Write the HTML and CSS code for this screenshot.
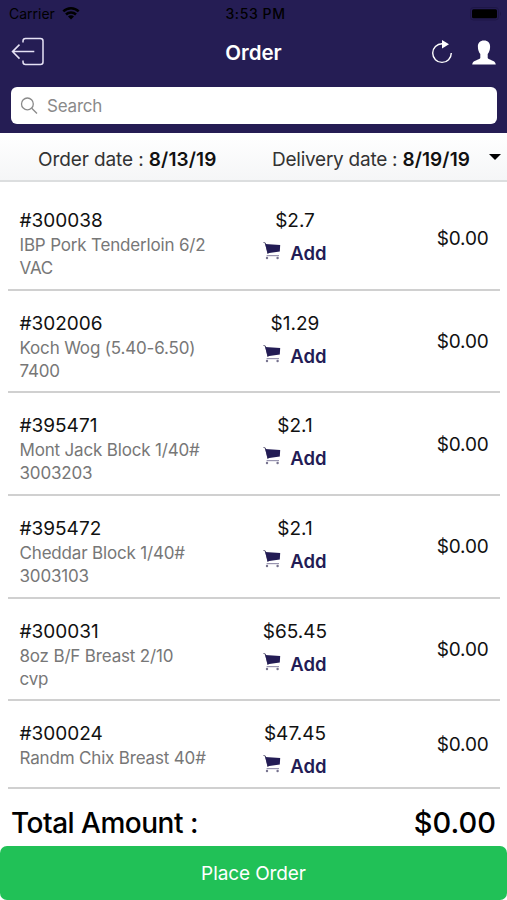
FILE: index.html
```
<!DOCTYPE html>
<html lang="en">
<head>
    <meta charset="UTF-8">
    <meta name="viewport" content="width=device-width, initial-scale=1.0">
    <title>Order</title>
    <link rel="stylesheet" href="styles.css">
</head>
<body>
    <svg class="symbols" width="0" height="0">
        <symbol id="cart" viewBox="0 0 18 18">
            <path d="M0.5 0.5 2.4 1 5 12" fill="none" stroke="#55516f"/>
            <path d="M2.2 2 17.2 3 16.8 9.6 4.6 11.2z" fill="#231c55"/>
            <path d="M3.6 13.6H16" fill="none" stroke="#9995b0" stroke-width="1.2"/>
            <circle cx="4" cy="16" r="1.2" fill="#77738f"/>
            <circle cx="14.6" cy="16" r="1.2" fill="#77738f"/>
        </symbol>
    </svg>

    <div class="header">
        <div class="status-bar">
            <div class="carrier">
                <span>Carrier</span>
                <svg width="18" height="13" viewBox="0 0 18 13">
                    <path d="M1.3 4.4a11 11 0 0 1 15.4 0M4 7.5a7.1 7.1 0 0 1 10 0" fill="none" stroke="#000" stroke-width="2.5"/>
                    <path d="M9 12.4 6 9.4a4.2 4.2 0 0 1 6 0z"/>
                </svg>
            </div>
            <div class="clock">3:53 PM</div>
            <svg class="battery" width="32" height="14" viewBox="0 0 32 14">
                <rect x="0.5" y="0.5" width="28" height="12.5" rx="3" fill="none" stroke="#1e1747"/>
                <rect x="2" y="2.3" width="25" height="9" rx="1.5"/>
                <path d="M30 4.8q2 2 0 4z" fill="#1e1747"/>
            </svg>
        </div>
        <div class="nav-bar">
            <svg width="34" height="30" viewBox="0 0 34 30" fill="none" stroke="#e6e2f5" stroke-width="1.5">
                <path d="M12 5.5V4q0-2.5 2.5-2.5h15Q32 1.500 32 4v21q0 2.500-2.500 2.500h-15Q12 27.500 12 25v-1.500"/>
                <path d="M23.300 14.600H1.500M8.500 7.600l-7 7 7 7"/>
            </svg>
            <div class="title">Order</div>
            <div class="actions">
                <svg width="22" height="24" viewBox="0 0 22 24">
                    <path d="M10 3.800a9.300 9.300 0 1 0 9.300 9.300" fill="none" stroke="#fff" stroke-width="1.400"/>
                    <path d="M10 0 17 4.300 10 8.600z" fill="#fff"/>
                </svg>
                <svg width="24" height="25" viewBox="0 0 24 25">
                    <path d="M12 0.500c4 0 6.300 2.500 6.100 6.500-.1 3-1 5.400-2.400 7.100v4c1 2.400 7.800 1.800 8.100 6.500H.2c.3-4.700 7.100-4.100 8.100-6.500v-4C6.900 12.400 6 10 5.900 7 5.700 3 8 .5 12 .5z" fill="#fff"/>
                </svg>
            </div>
        </div>
        <div class="search">
            <svg width="18" height="18" viewBox="0 0 18 18" fill="none" stroke="#8a8a8a" stroke-width="1.300">
                <circle cx="7.400" cy="6.900" r="5.900"/>
                <path d="M11.700 11.200 17 16.500"/>
            </svg>
            <span>Search</span>
        </div>
    </div>

    <div class="dates">
        <div class="date order-date">Order date : <b>8/13/19</b></div>
        <div class="date delivery-date">Delivery date : <b>8/19/19</b></div>
        <div class="caret"></div>
    </div>

    <div class="list">
        <div class="item">
            <div class="product">
                <div class="code">#300038</div>
                <div class="name">IBP Pork Tenderloin 6/2<br>VAC</div>
            </div>
            <div class="buy">
                <div class="price">$2.7</div>
                <div class="add"><svg class="cart"><use href="#cart"/></svg>Add</div>
            </div>
            <div class="amount">$0.00</div>
        </div>
        <div class="item">
            <div class="product">
                <div class="code">#302006</div>
                <div class="name">Koch Wog (5.40-6.50)<br>7400</div>
            </div>
            <div class="buy">
                <div class="price">$1.29</div>
                <div class="add"><svg class="cart"><use href="#cart"/></svg>Add</div>
            </div>
            <div class="amount">$0.00</div>
        </div>
        <div class="item">
            <div class="product">
                <div class="code">#395471</div>
                <div class="name">Mont Jack Block 1/40#<br>3003203</div>
            </div>
            <div class="buy">
                <div class="price">$2.1</div>
                <div class="add"><svg class="cart"><use href="#cart"/></svg>Add</div>
            </div>
            <div class="amount">$0.00</div>
        </div>
        <div class="item">
            <div class="product">
                <div class="code">#395472</div>
                <div class="name">Cheddar Block 1/40#<br>3003103</div>
            </div>
            <div class="buy">
                <div class="price">$2.1</div>
                <div class="add"><svg class="cart"><use href="#cart"/></svg>Add</div>
            </div>
            <div class="amount">$0.00</div>
        </div>
        <div class="item">
            <div class="product">
                <div class="code">#300031</div>
                <div class="name">8oz B/F Breast 2/10<br>cvp</div>
            </div>
            <div class="buy">
                <div class="price">$65.45</div>
                <div class="add"><svg class="cart"><use href="#cart"/></svg>Add</div>
            </div>
            <div class="amount">$0.00</div>
        </div>
        <div class="item">
            <div class="product">
                <div class="code">#300024</div>
                <div class="name">Randm Chix Breast 40#</div>
            </div>
            <div class="buy">
                <div class="price">$47.45</div>
                <div class="add"><svg class="cart"><use href="#cart"/></svg>Add</div>
            </div>
            <div class="amount">$0.00</div>
        </div>
    </div>

    <div class="total">
        <span class="total-label">Total Amount :</span>
        <span class="total-value">$0.00</span>
    </div>
    <button class="place-order">Place Order</button>
</body>
</html>
```
FILE: styles.css
```
* {
    box-sizing: border-box;
}
body {
    font-family: Inter, "Liberation Sans", sans-serif;
    background-color: #fff;
    color: #111;
    margin: 0;
    height: 900px;
    display: flex;
    flex-direction: column;
    overflow: hidden;
}
.symbols {
    position: absolute;
}
.header {
    background-color: #251d54;
    height: 133px;
    flex: none;
}
.status-bar {
    display: grid;
    grid-template-columns: 1fr auto 1fr;
    align-items: center;
    height: 27px;
    padding: 0 5px 0 9px;
    color: #000;
    font-size: 14px;
}
.carrier {
    display: flex;
    align-items: center;
    gap: 7px;
}
.clock {
    font-weight: 500;
    font-size: 14px;
    letter-spacing: 0.6px;
}
.battery {
    justify-self: end;
}
.nav-bar {
    display: grid;
    grid-template-columns: 1fr auto 1fr;
    align-items: center;
    height: 50px;
    padding: 0 11px;
}
.title {
    color: #fff;
    font-size: 20.5px;
    font-weight: 600;
}
.actions {
    display: flex;
    justify-content: flex-end;
    align-items: center;
    gap: 18px;
}
.search {
    display: flex;
    align-items: center;
    gap: 9px;
    height: 37px;
    margin: 10px 10px 0 11px;
    padding: 1px 9px 0;
    background-color: #fff;
    border-radius: 6px;
    color: #8a8a8a;
    font-size: 17px;
    letter-spacing: -0.2px;
}
.dates {
    display: flex;
    align-items: center;
    height: 49px;
    flex: none;
    padding: 5px 6px 0 38px;
    background: linear-gradient(#fff, #f5f6f7);
    border-bottom: 2px solid #dcdedf;
    color: #333;
    font-size: 19px;
    letter-spacing: -0.1px;
    white-space: nowrap;
}
.date b {
    color: #111;
    font-weight: 600;
    letter-spacing: 0.1px;
}
.order-date {
    width: 234px;
}
.delivery-date {
    flex: 1;
    letter-spacing: -0.25px;
}
.caret {
    margin-top: -4px;
    border: 6px solid transparent;
    border-top: 6px solid #000;
    border-bottom: 0;
}
.list {
    padding: 6px 7px 0 8px;
    flex: none;
}
.item {
    display: flex;
    padding: 20px 11.5px 8px;
    border-bottom: 2px solid #d0d0d0;
    height: 102.67px;
}
.item:last-child {
    height: 88px;
}
.product {
    width: 217px;
}
.code,
.price {
    font-size: 19px;
    line-height: 26px;
}
.name {
    color: #777;
    font-size: 17px;
    letter-spacing: -0.17px;
    line-height: 23px;
    white-space: nowrap;
}
.buy {
    width: 117px;
    text-align: center;
}
.add {
    display: flex;
    justify-content: center;
    align-items: center;
    gap: 9px;
    margin-top: 6px;
    line-height: 26px;
    color: #231c55;
    font-size: 18.5px;
    font-weight: 600;
}
.cart {
    width: 18px;
    height: 18px;
    margin-top: -4px;
}
.amount {
    flex: 1;
    align-self: center;
    text-align: right;
    font-size: 19px;
    letter-spacing: -0.2px;
    line-height: 26px;
    margin-top: -10px;
}
.total {
    display: flex;
    justify-content: space-between;
    align-items: center;
    flex: 1;
    padding: 11px 11px 0;
    color: #000;
    line-height: 36px;
}
.total-label {
    font-size: 28px;
    font-weight: 450;
    letter-spacing: -0.5px;
}
.total-value {
    font-size: 29px;
    font-weight: 450;
}
.place-order {
    height: 54px;
    flex: none;
    border: none;
    border-radius: 7px;
    background-color: #21c157;
    color: #fff;
    font-family: inherit;
    font-size: 19px;
    letter-spacing: -0.1px;
}
```
